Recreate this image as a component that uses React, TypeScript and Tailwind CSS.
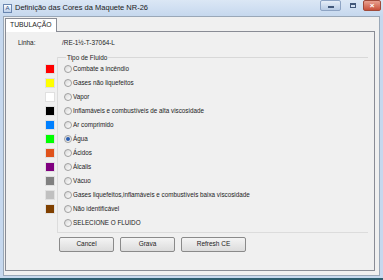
import React, { useState } from 'react'

const fluidos = [
  { nome: 'Combate a incêndio', cor: 'bg-[#ff0000]' },
  { nome: 'Gases não liquefeitos', cor: 'bg-[#ffff00]' },
  { nome: 'Vapor', cor: 'bg-white' },
  { nome: 'Inflamáveis e combustíveis de alta viscosidade', cor: 'bg-black' },
  { nome: 'Ar comprimido', cor: 'bg-[#0080ff]' },
  { nome: 'Água', cor: 'bg-[#00ff00]' },
  { nome: 'Ácidos', cor: 'bg-[#e0531c]' },
  { nome: 'Álcalis', cor: 'bg-[#800080]' },
  { nome: 'Vácuo', cor: 'bg-[#808080]' },
  { nome: 'Gases liquefeitos,inflamáveis e combustíveis baixa viscosidade', cor: 'bg-[#c0c0c0]' },
  { nome: 'Não identificável', cor: 'bg-[#804000]' },
  { nome: 'SELECIONE O FLUIDO', cor: '' },
]

const Radio = ({ checked }: { checked: boolean }) => (
  <span className='w-[8px] h-[8px] rounded-full border border-[#a0a0a0] bg-gradient-to-br from-[#d8d8d8] to-white flex items-center justify-center shrink-0'>
    {checked && <span className='w-[4px] h-[4px] rounded-full bg-[#2a5db0]'></span>}
  </span>
)

const Botao = ({ texto, largura }: { texto: string, largura: string }) => (
  <button className={`${largura} h-[15px] border border-[#8a8a8a] rounded-[2px] bg-gradient-to-b from-[#f4f4f4] to-[#dcdcdc] text-[6.5px] text-[#222] leading-none`}>{texto}</button>
)

const App = () => {
  const [fluido, setFluido] = useState(5)

  return (
    <div className='w-[383px] h-[280px] bg-[#c6d8ee] flex flex-col overflow-hidden border-b-2 border-[#2c5d6e]' style={{ fontFamily: '"Liberation Sans", Arial, sans-serif' }}>
      {/* barra de titulo */}
      <div className='h-[16px] flex items-center shrink-0 bg-gradient-to-b from-[#dbe7f5] to-[#c6d8ee]'>
        <div className='w-[9px] h-[9px] ml-[3px] mr-[3px] border border-[#6a86b0] bg-gradient-to-b from-white to-[#bcd0ea] flex items-center justify-center text-[6px] text-[#2a4a80] leading-none'>A</div>
        <span className='text-[7.5px] text-[#1a1a1a]'>Definição das Cores da Maquete NR-26</span>
        <div className='ml-auto flex items-start h-full'>
          <div className='w-[21px] h-[11px] mr-[3px] border border-[#8ea4c4] rounded-[2px] bg-gradient-to-b from-[#e6eef8] to-[#b8cbe4] flex items-end justify-center pb-[2px]'>
            <span className='w-[6px] h-[2px] bg-[#42587a]'></span>
          </div>
          <div className='w-[18px] h-[11px] mr-[1px] flex items-center justify-center'>
            <span className='w-[6px] h-[5px] border border-[#42587a] border-t-2'></span>
          </div>
          <div className='w-[18px] h-[11px] mr-[2px] border border-[#a04a3a] rounded-[2px] bg-gradient-to-b from-[#e8a090] to-[#c8503a] flex items-center justify-center text-[8px] text-white font-bold leading-none'>×</div>
        </div>
      </div>

      {/* corpo */}
      <div className='flex-1 mx-[3px] mb-[2px] bg-[#f0f0f0] border border-[#9aa8b8] flex flex-col pl-[1px] pr-[4px] pt-[1px] pb-[4px]'>
        <div className='flex'>
          <div className='h-[14px] px-[4px] bg-white border border-[#898c95] border-b-0 flex items-center text-[6.8px] text-[#222] relative z-10 -mb-[1px]'>TUBULAÇÃO</div>
        </div>
        <div className='flex-1 border border-[#898c95] bg-[#f0f0f0] flex flex-col pl-[12px] pr-[6px]'>
          <div className='flex items-center h-[11px] mt-[5px] text-[6.4px] text-[#222]'>
            <span className='w-[44px]'>Linha:</span>
            <span>/RE-1½-T-37064-L</span>
          </div>

          <div className='flex mt-[9px]'>
            <div className='w-[39px] flex flex-col pt-[5px]'>
              {fluidos.map((f, i) => (
                <div key={i} className='h-[14px] flex items-center justify-end pr-[2px]'>
                  {f.cor && <span className={`w-[10px] h-[10px] ${f.cor} border border-[#e0e0e0]`}></span>}
                </div>
              ))}
            </div>
            <div className='flex-1 flex flex-col'>
              <div className='border-l border-b border-[#dcdcdc] pl-[6px] pb-[2px]'>
                <div className='h-[5px] border-t border-[#d8d8d8] relative -ml-[6px]'>
                  <span className='absolute left-[8px] -top-[5px] px-[1px] bg-[#f0f0f0] text-[6.4px] text-[#222] leading-[9px]'>Tipo de Fluido</span>
                </div>
                {fluidos.map((f, i) => (
                  <div key={i} className='h-[14px] flex items-center gap-[1px] text-[6.3px] text-[#222] cursor-default' onClick={() => setFluido(i)}>
                    <Radio checked={fluido === i} />
                    <span>{f.nome}</span>
                  </div>
                ))}
              </div>
              <div className='flex gap-[6px] mt-[4px] ml-[2px]'>
                <Botao texto='Cancel' largura='w-[55px]' />
                <Botao texto='Grava' largura='w-[55px]' />
                <Botao texto='Refresh CE' largura='w-[65px]' />
              </div>
            </div>
          </div>
        </div>
      </div>
    </div>
  )
}

export default App
